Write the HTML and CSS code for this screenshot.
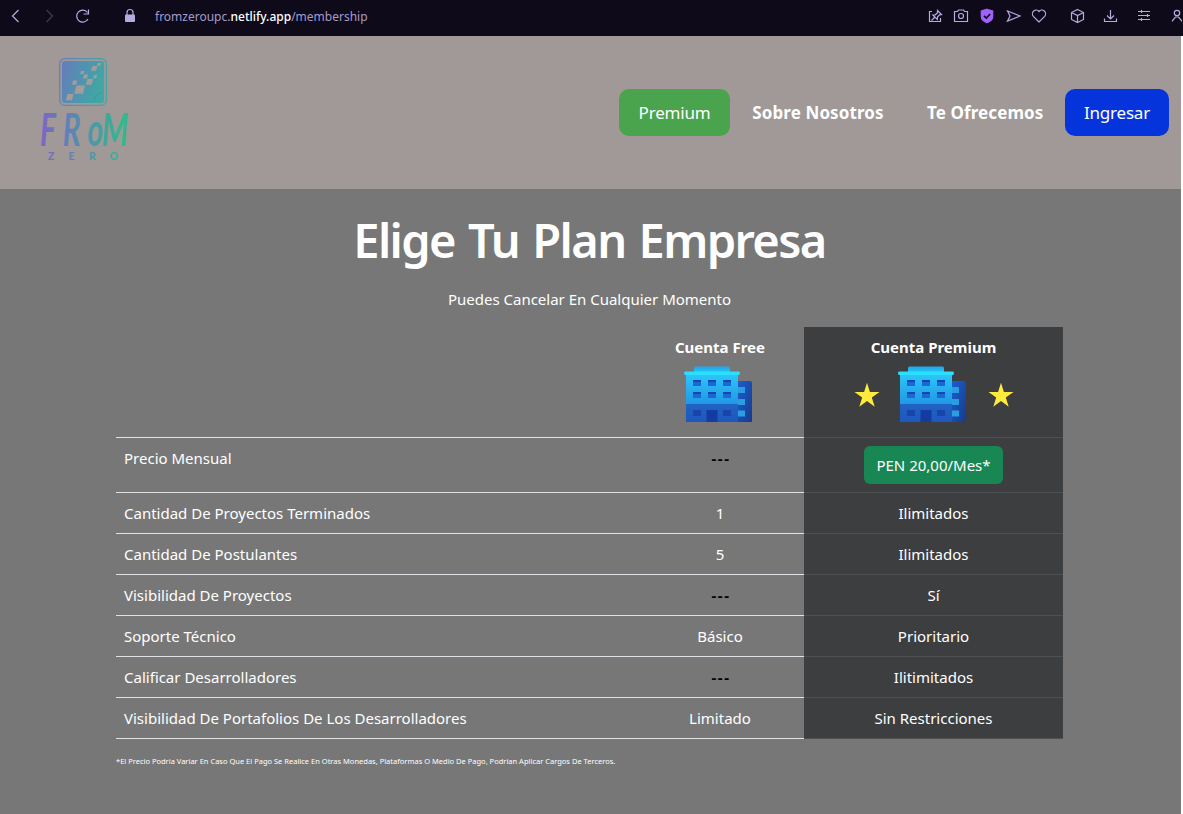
FILE: index.html
```html
<!DOCTYPE html>
<html lang="es">
<head>
<meta charset="utf-8">
<title>Membership</title>
<link rel="stylesheet" href="styles.css">
</head>
<body>
<svg class="defs" width="0" height="0" aria-hidden="true">
  <defs>
    <linearGradient id="wall" x1="0" y1="0" x2="0" y2="1"><stop offset="0" stop-color="#2cc6fa"/><stop offset="1" stop-color="#2196e3"/></linearGradient>
    <linearGradient id="base" x1="0" y1="0" x2="0" y2="1"><stop offset="0" stop-color="#2163c2"/><stop offset="1" stop-color="#1d57c0"/></linearGradient>
    <linearGradient id="roof" x1="0" y1="0" x2="0" y2="1"><stop offset="0" stop-color="#1fa6ea"/><stop offset="1" stop-color="#25c4f5"/></linearGradient>
    <linearGradient id="annex" x1="0" y1="0" x2="1" y2="1"><stop offset="0" stop-color="#1c5fd0"/><stop offset="1" stop-color="#183a8c"/></linearGradient>
    <symbol id="building" viewBox="0 0 70 58">
      <path d="M53 16h13q2 0 2 2V57H53z" fill="url(#annex)"/>
      <path d="M54 22h7v6h-7zM54 34h7v6h-7zM54 45.500h7v6h-7z" fill="#2b9de0"/>
      <path d="M10 7V3Q10 1.500 11.500 1.500h33Q46 1.500 46 3V7z" fill="url(#roof)"/>
      <path d="M2 9h52v31H2z" fill="url(#wall)"/>
      <path d="M2 39h52v18H2z" fill="url(#base)"/>
      <path d="M1 6.500h54l1 1-.5 2.500H.5L0 7.500z" fill="#2be0fc"/>
      <g fill="#1c67d6"><path d="M9 15h8v6H9zM24 15h8v6h-8zM39 15h8v6h-8zM9 27h8v6H9zM24 27h8v6h-8zM39 27h8v6h-8z"/></g>
      <g fill="#1846a8"><path d="M9 15h8v2H9zM24 15h8v2h-8zM39 15h8v2h-8zM9 27h8v2H9zM24 27h8v2h-8zM39 27h8v2h-8z"/><path d="M9 45h8v6H9zM39 45h8v6h-8z"/></g>
      <path d="M22.500 45h11v12h-11z" fill="#143b9f"/>
    </symbol>
    <symbol id="star" viewBox="0 0 26 26"><path d="M13 .8 15.900 10H25.500L17.800 15.600 20.700 24.700 13 19.100 5.300 24.700 8.200 15.600.5 10h9.600z" fill="#ffeb3b"/></symbol>
  </defs>
</svg>

<div class="browser-bar">
  <svg class="bar-icons" width="140" height="36" viewBox="0 0 140 36">
    <path d="M18.500 10 12.500 16 18.500 22"/>
    <path d="M46.500 10 52.500 16 46.500 22" stroke="#403b57"/>
    <path d="M87.500 12.500A6 6 0 1 0 88 19M88.500 9.500v4.500h-5"/>
    <path d="M127 15v-2.500a3 3 0 0 1 6 0V15"/><rect x="125" y="14.500" width="10" height="7.500" rx="1" fill="#b6abe0" stroke="none"/>
  </svg>
  <span class="url">fromzeroupc.<b>netlify.app</b>/membership</span>
  <svg class="bar-icons tools" width="263" height="36" viewBox="920 0 263 36">
    <path d="M932 11.500h-2.500v10h11V18M937.500 10.500l4 4-2 .3-2 2.200-.2 2.500-4.500-4.500 2.500-.2 2.200-2zM934.500 17.500l-3 3"/>
    <path d="M954.500 11.500h3l1-1.500h5l1 1.500h3v10h-13z"/><circle cx="961" cy="16" r="2.500"/>
    <path d="M987 9.200 992.700 11v5.500q0 4-5.700 6.300-5.700-2.300-5.700-6.300V11z" fill="#9f62fb" stroke="#9f62fb"/><path d="M984 15.800l2.300 2.200 3.900-4" stroke="#0e0a1a" stroke-width="1.600"/>
    <path d="M1007.500 11l12.500 5-12.500 5 2.500-5z"/>
    <path d="M1039 22l-5.700-5.700a3.700 3.700 0 0 1 5.700-4.800 3.700 3.700 0 0 1 5.700 4.800z"/>
    <path d="M1077.500 9.500 1083.500 12.500v7l-6 3-6-3v-7zM1071.500 12.500l6 3 6-3M1077.500 15.500v7"/>
    <path d="M1110.500 10v8.500M1107 15.500l3.500 3.500 3.500-3.500M1104.500 18.500v3h12v-3"/>
    <path d="M1138 11.500h12M1138 15.500h12M1138 19.500h12M1141.500 10v3M1147.500 14v3M1141.500 18v3"/>
    <circle cx="1177" cy="13" r="2.700"/><path d="M1172.500 21.500v-1l3-3.500h3l3 3.500v1"/>
  </svg>
</div>

<div class="page">
  <header class="site-header">
    <svg class="logo" width="110" height="130" viewBox="0 0 110 130">
      <defs>
        <linearGradient id="brand" gradientUnits="userSpaceOnUse" x1="2" y1="0" x2="86" y2="0"><stop offset="0" stop-color="#7c66c4"/><stop offset=".4" stop-color="#5a87b3"/><stop offset="1" stop-color="#31ba8c"/></linearGradient>
        <linearGradient id="brand-word" gradientUnits="userSpaceOnUse" x1="2" y1="0" x2="140" y2="0"><stop offset="0" stop-color="#7c66c4"/><stop offset=".4" stop-color="#5a87b3"/><stop offset="1" stop-color="#31ba8c"/></linearGradient>
        <linearGradient id="tile" x1="0" y1="0" x2="1" y2=".3"><stop offset="0" stop-color="#667cbb"/><stop offset="1" stop-color="#3fa7a5"/></linearGradient>
      </defs>
      <rect x="19.700" y="5.700" width="46.600" height="46.600" rx="5" fill="none" stroke="url(#tile)" stroke-width="1.300"/>
      <rect x="22" y="8" width="42" height="42" rx="3" fill="url(#tile)"/>
      <path d="M27.500 41h6L32 47.300h-6.200zM36.500 32.500h8.500l-2 8.300h-8.800zM33 27.500h4.200l-1 4.200H32zM47.500 26h5.800l-1.700 5.700h-6zM44 21.500h4l-1 4h-4zM41 18h3.500l-1 3H40zM52.500 13h5l-1.500 4.700h-5.200zM58 10h3l-1 3h-3zM54 22h3.300l-1 3.200H53z" fill="#a39c9a"/>
      <path d="M54 49q0-7 8-10" fill="none" stroke="#3b9e98" stroke-width="1"/>
      <text class="logo-word" x="0 38 79 103" y="100" fill="url(#brand-word)" transform="scale(.6 .93)">FRoM</text>
      <text class="logo-sub" y="107" x="8 28.500 49 69.500" fill="url(#brand)">ZERO</text>
    </svg>
    <nav class="nav">
      <a class="pill premium">Premium</a>
      <a class="link about">Sobre Nosotros</a>
      <a class="link offer">Te Ofrecemos</a>
      <a class="pill login">Ingresar</a>
    </nav>
  </header>

  <main class="plans">
    <h1>Elige Tu Plan Empresa</h1>
    <p class="lead">Puedes Cancelar En Cualquier Momento</p>
    <table class="compare">
      <colgroup><col class="c-name"><col class="c-free"><col class="c-prem"></colgroup>
      <tr class="head">
        <th></th>
        <th>Cuenta Free<div class="art"><svg class="building"><use href="#building"/></svg></div></th>
        <th class="dark">Cuenta Premium<div class="art"><svg class="star"><use href="#star"/></svg><svg class="building"><use href="#building"/></svg><svg class="star"><use href="#star"/></svg></div></th>
      </tr>
      <tr class="price"><td>Precio Mensual</td><td class="none">---</td><td class="dark"><span class="btn">PEN 20,00/Mes*</span></td></tr>
      <tr><td>Cantidad De Proyectos Terminados</td><td>1</td><td class="dark">Ilimitados</td></tr>
      <tr><td>Cantidad De Postulantes</td><td>5</td><td class="dark">Ilimitados</td></tr>
      <tr><td>Visibilidad De Proyectos</td><td class="none">---</td><td class="dark">Sí</td></tr>
      <tr><td>Soporte Técnico</td><td>Básico</td><td class="dark">Prioritario</td></tr>
      <tr><td>Calificar Desarrolladores</td><td class="none">---</td><td class="dark">Ilitimitados</td></tr>
      <tr><td>Visibilidad De Portafolios De Los Desarrolladores</td><td>Limitado</td><td class="dark">Sin Restricciones</td></tr>
    </table>
    <p class="note">*El Precio Podria Variar En Caso Que El Pago Se Realice En Otras Monedas, Plataformas O Medio De Pago, Podrian Aplicar Cargos De Terceros.</p>
  </main>
</div>
</body>
</html>
```
FILE: styles.css
```css
* { box-sizing: border-box; }
body { margin: 0; background: #fff; font-family: "Noto Sans", "Open Sans", sans-serif; color: #fff; height: 814px; overflow: hidden; }
.defs { position: absolute; }
.browser-bar { height: 36px; background: #0e0a1a; display: flex; align-items: center; }
.bar-icons { fill: none; stroke: #b6abe0; stroke-width: 1.2; flex: none; display: block; }
.url { margin-left: 15px; font-size: 12px; line-height: 34px; height: 36px; color: #a59bcb; white-space: nowrap; }
.url b { color: #fff; font-weight: 500; }
.tools { margin-left: auto; }
.page { width: 1181px; height: 778px; background: #777; }
.site-header { height: 153px; background: #a09998; display: flex; align-items: flex-start; padding: 17px 12px 0 40px; }
.logo { display: block; overflow: visible; }
.logo-word { font: italic 700 50px Lato, sans-serif; }
.logo-sub { font: 900 10.500px Lato, sans-serif; }
.nav { margin-left: auto; display: flex; align-items: center; height: 47px; margin-top: 36px; }
.nav a { font-size: 17px; line-height: 47px; height: 47px; white-space: nowrap; text-align: center; }
.pill { border-radius: 10px; }
.nav .pill { letter-spacing: -0.2px; }
.premium { background: #4aa44d; width: 111px; }
.login { background: #0634dc; width: 104px; }
.link { font-weight: 700; letter-spacing: 0.1px; }
.about { width: 132px; margin-left: 22px; }
.offer { width: 116px; margin: 0 22px 0 43px; }
.plans { padding: 22px 118px 0 116px; }
h1 { margin: 0; font-size: 47px; line-height: 58px; font-weight: 600; letter-spacing: -1.6px; word-spacing: 2.4px; text-align: center; white-space: nowrap; }
.lead { margin: 19px 0 16px; font-size: 15px; line-height: 23px; text-align: center; }
.compare { border-collapse: separate; border-spacing: 0; table-layout: fixed; width: 947px; font-size: 15px; line-height: 24px; }
.c-name { width: 520px; }
.c-free { width: 168px; }
.c-prem { width: 259px; }
.compare th, .compare td { height: 41px; padding: 8px; vertical-align: top; text-align: center; border-bottom: 1px solid #dee2e6; white-space: nowrap; }
.compare td:first-child { text-align: left; }
.compare .dark { background: #3d3e3f; border-color: #4d5154; }
.compare .head th { height: 111px; font-weight: 700; }
.compare .price td { height: 55px; }
.compare .none { color: #000; font-weight: 700; letter-spacing: 1.6px; padding-left: 10px; }
.art { display: flex; justify-content: center; align-items: center; height: 58px; margin-top: 6px; gap: 19px; }
.building { width: 70px; height: 58px; }
.head th:nth-child(2) .building { margin-right: 2px; }
.head .dark .building { margin: 0 1px 0 -1px; }
.star { width: 26px; height: 26px; margin-top: 2px; }
.btn { display: inline-block; width: 139px; height: 38px; line-height: 38px; border-radius: 6px; background: #198754; }
.note { margin: 16px 0 0; font-size: 7.500px; line-height: 12px; white-space: nowrap; }
```
